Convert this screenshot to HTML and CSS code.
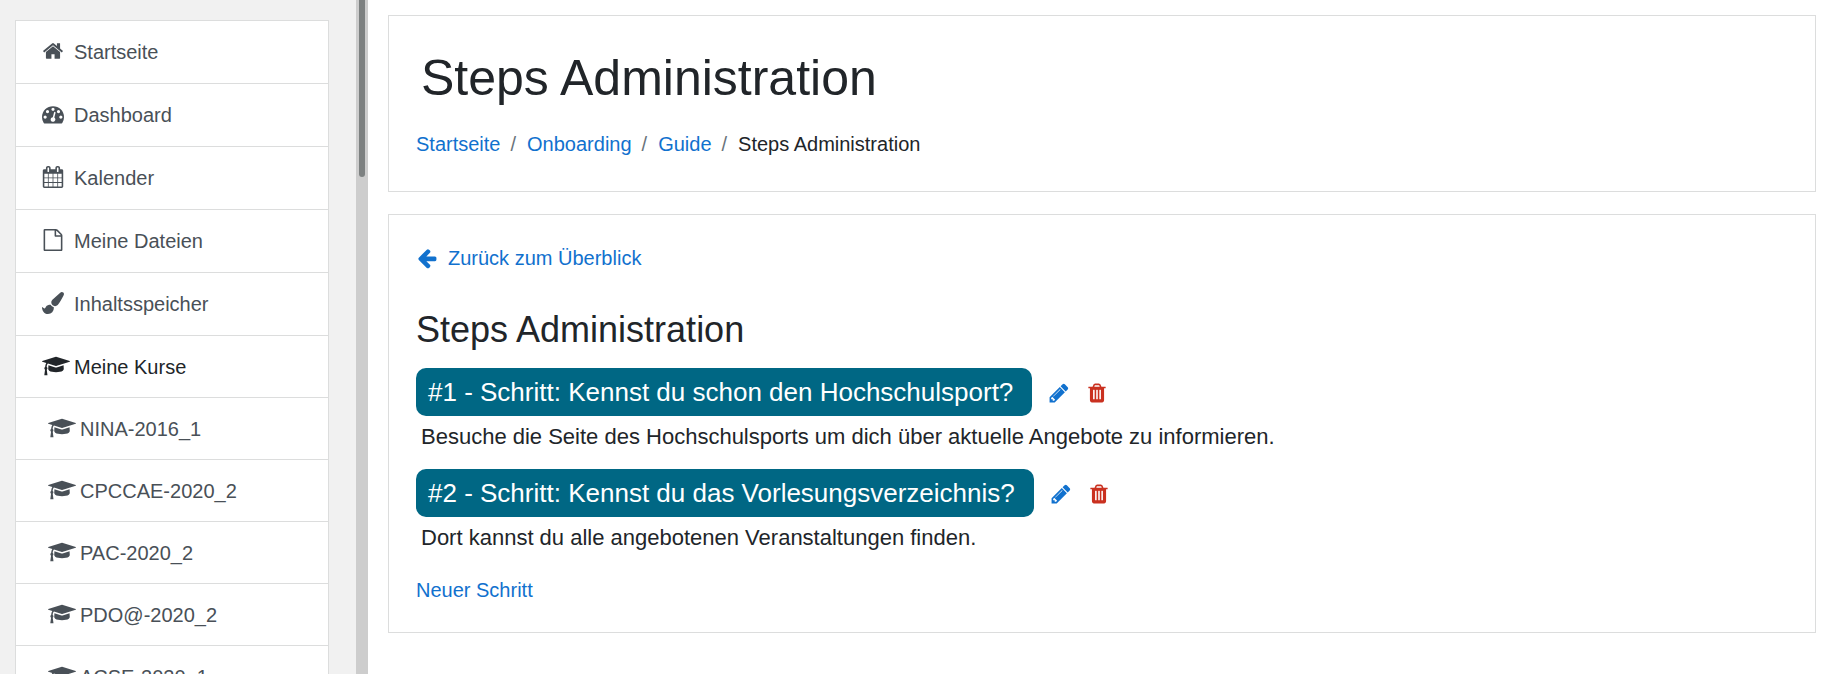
FILE: index.html
```html
<!DOCTYPE html>
<html lang="de">
<head>
<meta charset="utf-8">
<meta name="viewport" content="width=device-width, initial-scale=1">
<title>Steps Administration</title>
<link rel="stylesheet" href="styles.css">
</head>
<body>
<svg class="sprite" aria-hidden="true">
  <symbol id="home" viewBox="0 0 1792 1792"><path d="M1472 992v480q0 26-19 45t-45 19h-384v-384h-256v384h-384q-26 0-45-19t-19-45v-480q0-1 .5-3t.5-3l575-474 575 474q1 2 1 6zm223-69l-62 74q-8 9-21 11h-3q-13 0-21-7l-692-577-692 577q-12 8-24 7-13-2-21-11l-62-74q-8-10-7-23.5t11-21.5l719-599q32-26 76-26t76 26l244 204v-195q0-14 9-23t23-9h192q14 0 23 9t9 23v408l219 182q10 8 11 21.5t-7 23.5z"/></symbol>
  <symbol id="dashboard" viewBox="0 0 1792 1792"><path d="M384 1152q0-53-37.5-90.5t-90.5-37.5-90.5 37.5-37.5 90.5 37.5 90.5 90.5 37.5 90.5-37.5 37.5-90.5zm192-448q0-53-37.5-90.5t-90.5-37.5-90.5 37.5-37.5 90.5 37.5 90.5 90.5 37.5 90.5-37.5 37.5-90.5zm428 481l101-382q6-26-7.5-48.5t-38.5-29.5-48 6.5-30 39.5l-101 382q-60 5-107 43.5t-63 98.5q-20 77 20 146t117 89 146-20 89-117q16-60-6-117t-72-91zm660-33q0-53-37.5-90.5t-90.5-37.5-90.5 37.5-37.5 90.5 37.5 90.5 90.5 37.5 90.5-37.5 37.5-90.5zm-640-640q0-53-37.5-90.5t-90.5-37.5-90.5 37.5-37.5 90.5 37.5 90.5 90.5 37.5 90.5-37.5 37.5-90.5zm448 192q0-53-37.5-90.5t-90.5-37.5-90.5 37.5-37.5 90.5 37.5 90.5 90.5 37.5 90.5-37.5 37.5-90.5zm320 448q0 261-141 483-19 29-54 29h-1402q-35 0-54-29-141-221-141-483 0-182 71-348t191-286 286-191 348-71 348 71 286 191 191 286 71 348z"/></symbol>
  <symbol id="calendar" viewBox="0 0 1792 1792"><path d="M192 1664h288v-288h-288v288zm352 0h320v-288h-320v288zm-352-352h288v-320h-288v320zm352 0h320v-320h-320v320zm-352-384h288v-288h-288v288zm736 736h320v-288h-320v288zm-384-736h320v-288h-320v288zm768 736h288v-288h-288v288zm-384-352h320v-320h-320v320zm-352-864v-288q0-13-9.5-22.5t-22.5-9.5h-64q-13 0-22.5 9.5t-9.5 22.5v288q0 13 9.5 22.5t22.5 9.5h64q13 0 22.5-9.5t9.5-22.5zm736 864h288v-320h-288v320zm-384-384h320v-288h-320v288zm384 0h288v-288h-288v288zm32-480v-288q0-13-9.5-22.5t-22.5-9.5h-64q-13 0-22.5 9.5t-9.5 22.5v288q0 13 9.5 22.5t22.5 9.5h64q13 0 22.5-9.5t9.5-22.5zm384-64v1280q0 52-38 90t-90 38h-1408q-52 0-90-38t-38-90v-1280q0-52 38-90t90-38h128v-96q0-66 47-113t113-47h64q66 0 113 47t47 113v96h384v-96q0-66 47-113t113-47h64q66 0 113 47t47 113v96h128q52 0 90 38t38 90z"/></symbol>
  <symbol id="file" viewBox="0 0 1792 1792"><path d="M1596 380q28 28 48 76t20 88v1152q0 40-28 68t-68 28h-1344q-40 0-68-28t-28-68v-1600q0-40 28-68t68-28h896q40 0 88 20t76 48zm-444-244v376h376q-10-29-22-41l-313-313q-12-12-41-22zm384 1528v-1024h-416q-40 0-68-28t-28-68v-416h-768v1536h1280z"/></symbol>
  <symbol id="brush" viewBox="0 0 1792 1792"><path d="M1615 0q70 0 122.5 46.5t52.5 116.5q0 63-45 151-332 629-465 752-97 91-218 91-126 0-216.5-92.5t-90.5-219.5q0-128 92-212l638-579q59-54 130-54zm-909 1034q39 76 106.5 130t150.5 76l1 71q4 213-129.5 347t-348.5 134q-123 0-218-46.5t-152.5-127.5-86.5-183-29-220q7 5 41 30t62 44.5 59 36.5 46 17q41 0 55-37 25-66 57.5-112.5t69.5-76 88-47.5 103-25.5 125-10.5z"/></symbol>
  <symbol id="cap" viewBox="0 0 2304 1792"><path d="M1774 836l18 316q4 69-82 128t-235 93.5-323 34.5-323-34.5-235-93.5-82-128l18-316 574 181q22 7 48 7t48-7zm530-324q0 23-22 31l-1120 352q-4 1-10 1t-10-1l-652-206q-43 34-71 111.5t-34 178.5q63 36 63 109 0 69-58 107l58 433q2 14-8 25-9 11-24 11h-192q-15 0-24-11-10-11-8-25l58-433q-58-38-58-107 0-73 65-111 11-207 98-330l-333-104q-22-8-22-31t22-31l1120-352q4-1 10-1t10 1l1120 352q22 8 22 31z"/></symbol>
  <symbol id="arrow-left" viewBox="0 0 1792 1792"><path d="M1664 896v128q0 53-32.5 90.5t-84.5 37.5h-704l293 294q38 36 38 90t-38 90l-75 76q-37 37-90 37-52 0-91-37l-651-652q-37-37-37-90 0-52 37-91l651-650q38-38 91-38 52 0 90 38l75 74q38 38 38 91t-38 91l-293 293h704q52 0 84.5 37.5t32.5 90.5z"/></symbol>
  <symbol id="pencil" viewBox="0 0 1792 1792"><path d="M491 1536l91-91-235-235-91 91v107h128v128h107zm523-928q0-22-22-22-10 0-17 7l-542 542q-7 7-7 17 0 22 22 22 10 0 17-7l542-542q7-7 7-17zm-54-192l416 416-832 832h-416v-416zm683 96q0 53-37 90l-166 166-416-416 166-165q36-38 90-38 53 0 91 38l235 234q37 39 37 91z"/></symbol>
  <symbol id="trash" viewBox="0 0 1792 1792"><path d="M704 1376v-704q0-14-9-23t-23-9h-64q-14 0-23 9t-9 23v704q0 14 9 23t23 9h64q14 0 23-9t9-23zm256 0v-704q0-14-9-23t-23-9h-64q-14 0-23 9t-9 23v704q0 14 9 23t23 9h64q14 0 23-9t9-23zm256 0v-704q0-14-9-23t-23-9h-64q-14 0-23 9t-9 23v704q0 14 9 23t23 9h64q14 0 23-9t9-23zm-544-992h448l-48-117q-7-9-17-11h-317q-10 2-17 11zm928 32v64q0 14-9 23t-23 9h-96v948q0 83-47 143.5t-113 60.5h-832q-66 0-113-58.5t-47-141.5v-952h-96q-14 0-23-9t-9-23v-64q0-14 9-23t23-9h309l70-167q15-37 54-63t79-26h320q40 0 79 26t54 63l70 167h309q14 0 23 9t9 23z"/></symbol>
</svg>
<div class="layout">
  <nav class="drawer" aria-label="Navigation">
    <ul class="menu">
      <li><a class="item" href="#"><span class="slot"><svg class="icon"><use href="#home"/></svg></span>Startseite</a></li>
      <li><a class="item" href="#"><span class="slot"><svg class="icon"><use href="#dashboard"/></svg></span>Dashboard</a></li>
      <li><a class="item" href="#"><span class="slot"><svg class="icon"><use href="#calendar"/></svg></span>Kalender</a></li>
      <li><a class="item" href="#"><span class="slot"><svg class="icon"><use href="#file"/></svg></span>Meine Dateien</a></li>
      <li><a class="item" href="#"><span class="slot"><svg class="icon"><use href="#brush"/></svg></span>Inhaltsspeicher</a></li>
      <li><span class="item heading"><span class="slot"><svg class="icon wide"><use href="#cap"/></svg></span>Meine Kurse</span></li>
      <li><a class="item course" href="#"><span class="slot"><svg class="icon wide"><use href="#cap"/></svg></span>NINA-2016_1</a></li>
      <li><a class="item course" href="#"><span class="slot"><svg class="icon wide"><use href="#cap"/></svg></span>CPCCAE-2020_2</a></li>
      <li><a class="item course" href="#"><span class="slot"><svg class="icon wide"><use href="#cap"/></svg></span>PAC-2020_2</a></li>
      <li><a class="item course" href="#"><span class="slot"><svg class="icon wide"><use href="#cap"/></svg></span>PDO@-2020_2</a></li>
      <li><a class="item course" href="#"><span class="slot"><svg class="icon wide"><use href="#cap"/></svg></span>ACSE-2020_1</a></li>
    </ul>
    <div class="track"><div class="thumb"></div></div>
  </nav>
  <main class="main">
    <header class="card page-header">
      <h1>Steps Administration</h1>
      <nav aria-label="Breadcrumb">
        <ol class="breadcrumb">
          <li><a href="#">Startseite</a></li>
          <li><a href="#">Onboarding</a></li>
          <li><a href="#">Guide</a></li>
          <li>Steps Administration</li>
        </ol>
      </nav>
    </header>
    <section class="card">
      <a class="back" href="#"><svg class="icon"><use href="#arrow-left"/></svg>Zurück zum Überblick</a>
      <h2>Steps Administration</h2>
      <article class="step">
        <div class="step-head">
          <h3>#1 - Schritt: Kennst du schon den Hochschulsport?</h3>
          <a class="action edit" href="#" aria-label="Bearbeiten"><svg class="icon"><use href="#pencil"/></svg></a>
          <a class="action delete" href="#" aria-label="Löschen"><svg class="icon"><use href="#trash"/></svg></a>
        </div>
        <p>Besuche die Seite des Hochschulsports um dich über aktuelle Angebote zu informieren.</p>
      </article>
      <article class="step">
        <div class="step-head">
          <h3>#2 - Schritt: Kennst du das Vorlesungsverzeichnis?</h3>
          <a class="action edit" href="#" aria-label="Bearbeiten"><svg class="icon"><use href="#pencil"/></svg></a>
          <a class="action delete" href="#" aria-label="Löschen"><svg class="icon"><use href="#trash"/></svg></a>
        </div>
        <p>Dort kannst du alle angebotenen Veranstaltungen finden.</p>
      </article>
      <a class="new-step" href="#">Neuer Schritt</a>
    </section>
  </main>
</div>
</body>
</html>
```

FILE: styles.css
```css
* {
  box-sizing: border-box;
}

body {
  margin: 0;
  background: #fff;
  color: #212529;
  font: 20px/30px "Liberation Sans", Arial, sans-serif;
}

h1, h2, h3, p, ul, ol {
  margin: 0;
  padding: 0;
  font-weight: 400;
}

ul, ol {
  list-style: none;
}

a {
  color: #1171ce;
  text-decoration: none;
}

.sprite {
  display: none;
}

.icon {
  display: block;
  flex: none;
  width: 22px;
  height: 22px;
  fill: currentColor;
}

.icon.wide {
  width: 28px;
}

.layout {
  display: flex;
  height: 100vh;
  overflow: hidden;
}

/* Side navigation */
.drawer {
  display: flex;
  flex: none;
  justify-content: space-between;
  width: 368px;
  background: #f1f1f1;
}

.menu {
  align-self: flex-start;
  width: 314px;
  margin: 20px 0 0 15px;
  border: 1px solid #dcdddd;
  background: #fff;
}

.menu li + li {
  border-top: 1px solid #dcdddd;
}

.item {
  display: flex;
  align-items: center;
  padding: 16px 26px;
  color: #495057;
}

.item.heading {
  padding-bottom: 15px;
  color: #212529;
}

.item.course {
  padding: 16px 32px 15px;
}

.slot {
  flex: none;
  width: 32px;
  padding-bottom: 2px;
}

.track {
  display: flex;
  justify-content: center;
  width: 12px;
  background: #cdcdcd;
}

.thumb {
  width: 6px;
  height: 177px;
  border-radius: 0 0 3px 3px;
  background: #7d8181;
}

/* Content */
.main {
  flex: 1;
  min-width: 0;
  padding: 15px 19px 0 20px;
}

.card {
  margin-bottom: 22px;
  padding: 28px 27px 27px;
  border: 1px solid #dcdddd;
}

.page-header {
  padding: 32px 27px;
}

h1 {
  margin-bottom: 21px;
  padding-left: 5px;
  font-size: 50px;
  line-height: 60px;
}

.breadcrumb {
  display: flex;
  flex-wrap: wrap;
}

.breadcrumb li + li::before {
  content: "/";
  padding: 0 11px 0 10px;
  color: #6a737b;
}

.back {
  display: flex;
  align-items: center;
  width: fit-content;
  gap: 10px;
}

h2 {
  margin: 35px 0 17px;
  font-size: 36px;
  line-height: 43px;
}

.step {
  margin-bottom: 16px;
}

.step-head {
  display: flex;
  align-items: center;
  margin-bottom: 4px;
}

h3 {
  padding: 0 19px 0 12px;
  border-radius: 10px;
  background: #006784;
  color: #fff;
  font-size: 26px;
  line-height: 48px;
}

.action {
  margin-left: 16px;
  padding-top: 2px;
}

.delete {
  color: #ca3120;
}

.step p {
  padding-left: 5px;
  font-size: 22px;
  line-height: 33px;
}

.new-step {
  display: block;
  width: fit-content;
  margin-top: 21px;
}
```
